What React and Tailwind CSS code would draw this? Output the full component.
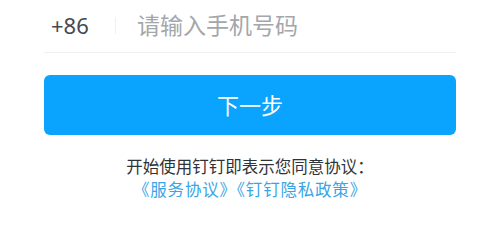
export default function App() {
  const font = { fontFamily: '"Noto Sans", "Noto Sans CJK SC", sans-serif' };
  return (
    <div className="w-[500px] h-[250px] bg-white overflow-hidden" style={font}>
      <div className="mx-[44px] h-[53px] flex items-center border-b border-[#eef0f2] pb-[2px]">
        <span className="ml-[7px] w-[44px] text-[22px] leading-none text-[#454a51]">+86</span>
        <span className="ml-[20px] w-px h-[17px] bg-[#eef0f2]" />
        <span className="ml-[21px] text-[23px] leading-none text-[#a3a7ab]">请输入手机号码</span>
      </div>
      <div className="mx-[44px] mt-[22px]">
        <button className="w-full h-[60px] rounded-[6px] bg-[#0aa4ff] text-white text-[22px] flex items-center justify-center">
          下一步
        </button>
      </div>
      <div className="mt-[20px] text-center text-[16.5px] leading-[23px]">
        <div className="text-[#2f3338]">开始使用钉钉即表示您同意协议：</div>
        <div className="text-[#3aa5e6] tracking-[0.8px]">《服务协议》《钉钉隐私政策》</div>
      </div>
    </div>
  );
}
